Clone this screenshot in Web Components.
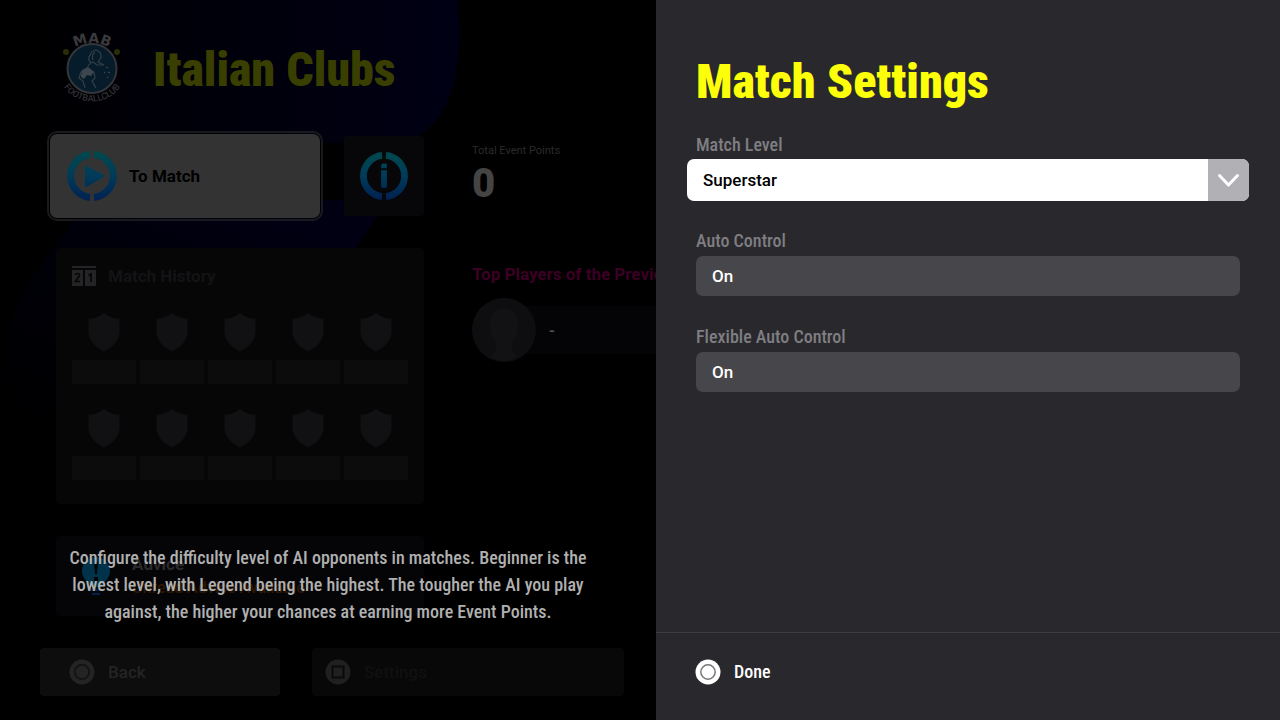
<!DOCTYPE html>
<html lang="en">
<head>
<meta charset="utf-8">
<meta name="viewport" content="width=device-width, initial-scale=1">
<title>Match Settings</title>
<style>
  body { margin: 0; background: #000; font-family: Roboto, "Open Sans", sans-serif; }
</style>
</head>
<body>
<match-app>
  <club-lobby slot="lobby">
    <club-title>Italian Clubs</club-title>
  </club-lobby>
  <help-text slot="lobby">Configure the difficulty level of AI opponents in matches. Beginner is the lowest level, with Legend being the highest. The tougher the AI you play against, the higher your chances at earning more Event Points.</help-text>
  <settings-panel slot="panel" heading="Match Settings">
    <setting-field label="Match Level" options="Superstar,Beginner,Legend" active></setting-field>
    <setting-field label="Auto Control" options="On,Off"></setting-field>
    <setting-field label="Flexible Auto Control" options="On,Off"></setting-field>
  </settings-panel>
</match-app>

<script>
const define = (name, html, setup) => {
  const template = document.createElement('template');
  template.innerHTML = html;
  customElements.define(name, class extends HTMLElement {
    connectedCallback() {
      if (this.shadowRoot) return;
      this.attachShadow({ mode: 'open' }).append(template.content.cloneNode(true));
      if (setup) setup(this, this.shadowRoot);
    }
  });
};

define('match-app', `
  <style>
    :host { display: grid; grid-template-columns: minmax(0, 41fr) minmax(0, 39fr); min-height: 100vh; }
    main { position: relative; overflow: hidden; }
  </style>
  <main><slot name="lobby"></slot></main>
  <slot name="panel"></slot>
`);

define('help-text', `
  <style>
    :host { position: absolute; left: 0; right: 0; bottom: 95px; padding: 0 54px; text-align: center;
      font: 500 18px/27px "Roboto Condensed", Roboto, sans-serif; color: #b0b0b0; }
    p { margin: 0; }
  </style>
  <p><slot></slot></p>
`);

/* Round ring with a split at the top and the bottom; the glyph goes in the middle. */
define('ring-icon', `
  <style>
    :host { display: block; width: 50px; height: 50px; flex: none; }
    svg { display: block; width: 100%; height: 100%; }
    .play, .info { display: none; }
    :host([glyph="info"]) { width: 48px; height: 48px; }
    :host([glyph="play"]) .play, :host([glyph="info"]) .info { display: inline; }
  </style>
  <svg viewBox="0 0 50 50" aria-hidden="true">
    <defs><linearGradient id="g" gradientUnits="userSpaceOnUse" x1="0" y1="0" x2="0" y2="50">
      <stop offset="0" stop-color="#00494c"/><stop offset=".5" stop-color="#003b59"/><stop offset="1" stop-color="#002052"/>
    </linearGradient></defs>
    <path d="M23 3.600A21.500 21.500 0 0 0 23 46.400M27 3.600A21.500 21.500 0 0 1 27 46.400" fill="none" stroke="url(#g)" stroke-width="7"/>
    <path class="play" d="M18 16Q18 14 20 15L36.500 24Q38 25 36.500 26L20 35.800Q18 36.500 18 34.500Z" fill="url(#g)"/>
    <path class="info" d="M23.500 12h3.500q1 0 1 1v4h-6v-3.500zM22 19h6v17q0 1.500-1.500 1.500h-3q-1.500 0-1.500-1.500z" fill="url(#g)"/>
  </svg>
`);

define('club-crest', `
  <style>
    :host { display: block; width: 60px; height: 72px; flex: none; }
    svg { display: block; overflow: visible; }
  </style>
  <svg width="60" height="72" viewBox="0 0 60 72" role="img" aria-label="MAB Football Club">
    <defs>
      <path id="top" d="M0 34.500A30 25.500 0 0 1 60 34.500"/>
      <path id="low" d="M-4 34.500A34 33 0 0 0 64 34.500"/>
    </defs>
    <circle cx="30" cy="34.500" r="24.500" fill="#061c2a" stroke="#34363b" stroke-width="2"/>
    <circle cx="4" cy="18" r="3" fill="#2b2d08"/><circle cx="55" cy="18" r="3" fill="#2b2d08"/>
    <path d="M28 22q1-6 6-6 6 2 5 8l-3 4 6 3-7 0-4-3q-5 2-6 7l-6 3-2 6 4 3 2 7M27 35l5 3 1 6-3 3 4 7M25 36l-6 6M28 21q-3 4 1 8M33 18q-4 3-2 8" fill="none" stroke="#343f47" stroke-width="1.200"/>
    <path d="M20 36l6-3 6 5-3 4-4-1-3 4-3-2z" fill="#3b464e"/>
    <path d="M44 33l2 1M46 38l2 1M42 38l1 1M45 43l1 1" stroke="#3b464e" stroke-width="1.200"/>
    <text style="font:700 14px 'DejaVu Sans',sans-serif" fill="#3a3a3c" text-anchor="middle"><textPath href="#top" startOffset="50%">MAB</textPath></text>
    <text style="font:500 9px Roboto,sans-serif" fill="#303032" text-anchor="middle"><textPath href="#low" startOffset="50%">FOOTBALLCLUB</textPath></text>
  </svg>
`);

define('club-title', `
  <style>
    :host { display: block; color: #393f00; }
    h1 { margin: 0; font: 900 48px/56px "Roboto Condensed", Roboto, sans-serif; white-space: nowrap; }
  </style>
  <h1><slot></slot></h1>
`);

define('match-history', `
  <style>
    :host { display: block; padding: 16px 16px 24px; border-radius: 4px; background: #060607; }
    header { display: flex; align-items: center; gap: 12px; margin-bottom: 24px; color: #131315; }
    h2 { margin: 0; font: 700 17px/24px Roboto, sans-serif; }
    ul { display: grid; grid-template-columns: repeat(5, 1fr); gap: 24px 4px; margin: 0; padding: 0; list-style: none; }
    li { display: grid; justify-items: center; gap: 8px; }
    li::after { content: ""; width: 100%; height: 24px; background: #0c0c0c; }
    svg { display: block; }
  </style>
  <header>
    <svg width="24" height="20" viewBox="0 0 24 20" aria-hidden="true">
      <path d="M0 0h24v2H0zM0 4h11v16H0zM13 4h11v16H13z" fill="#242426"/>
      <path d="M3.500 9Q3.500 7.500 5.500 7.500 8 7.500 7.500 9.500L3.500 15.500H8M16.500 9.500L19 8V16" fill="none" stroke="#060607" stroke-width="1.700"/>
    </svg>
    <h2>Match History</h2>
  </header>
  <ul></ul>
`, (host, root) => {
  root.querySelector('ul').innerHTML = ('<li><svg width="32" height="40" viewBox="0 0 32 40" aria-hidden="true">' +
    '<path d="M16 1Q22 6 31.500 7V20Q31 32 16 39.500 1 32 .500 20V7Q10 6 16 1Z" fill="#111113"/></svg></li>').repeat(10);
});

define('advice-card', `
  <style>
    :host { display: flex; align-items: center; gap: 20px; height: 80px; padding: 0 24px; border-radius: 4px; background: #050508; box-sizing: border-box; }
    svg { flex: none; width: 32px; height: 40px; }
    h2, p { margin: 0; }
    h2 { font: 700 17px/24px Roboto, sans-serif; color: #2a2a2c; }
    p { font: 500 16px/24px Roboto, sans-serif; color: #2e1700; }
  </style>
  <svg viewBox="0 0 32 40" aria-hidden="true">
    <path d="M16 1a14 14 0 0 1 8 25.500q-2 2-2 4.500H10q0-2.500-2-4.500A14 14 0 0 1 16 1Z" fill="#00324a"/>
    <path d="M10 34h12M12 38h8" stroke="#00224a" stroke-width="2"/>
    <path d="M14 6h4l-1 12h-2zM14 21h4v4h-4z" fill="#050508"/>
  </svg>
  <div><h2>Advice</h2><p>Unread Advice Available</p></div>
`);

define('event-summary', `
  <style>
    :host { display: block; min-width: 0; padding-top: 9px; white-space: nowrap; }
    dl, dd, h2, ol { margin: 0; padding: 0; }
    dt { font: 400 11px/16px Roboto, sans-serif; color: #2b2b2b; }
    dd { font: 900 40px/50px Roboto, sans-serif; color: #444; }
    h2 { margin: 53px 0 12px; font: 700 17px/24px Roboto, sans-serif; color: #3c0024; }
    li { display: flex; align-items: center; gap: 12px; height: 64px; font: 500 17px/24px Roboto, sans-serif; color: #555;
      background: linear-gradient(#040406, #040406) 32px 50% / 100% 48px no-repeat; }
    svg { flex: none; width: 65px; height: 64px; }
  </style>
  <dl><dt>Total Event Points</dt><dd>0</dd></dl>
  <h2>Top Players of the Previous</h2>
  <ol><li>
    <svg viewBox="0 0 65 64" aria-hidden="true">
      <circle cx="32" cy="32" r="32" fill="#0e0e10"/>
      <path d="M32 10q14 0 14 18 0 10-6 16v8l6 7q-14 8-28 0l6-7v-8q-6-6-6-16 0-18 14-18Z" fill="#121214"/>
    </svg>
    <span>-</span>
  </li></ol>
`);

/* Round controller key: a ring or a square cut into a filled disc. */
define('pad-key', `
  <style>
    :host { display: block; width: 24px; height: 24px; flex: none; }
    svg { display: block; overflow: visible; }
    .square { display: none; }
    :host([shape="square"]) .square { display: inline; }
    :host([shape="square"]) .ring { display: none; }
  </style>
  <svg width="24" height="24" viewBox="0 0 24 24" aria-hidden="true" fill="none" stroke="var(--cut)" stroke-width="var(--line, 1.500)">
    <circle cx="12" cy="12" r="12.500" fill="currentColor" stroke="none"/>
    <circle class="ring" cx="12" cy="12" r="7.200"/>
    <rect class="square" x="6.500" y="6.500" width="11" height="11"/>
  </svg>
`);

define('club-lobby', `
  <style>
    :host { display: block; position: relative; min-height: 100vh; box-sizing: border-box; padding: 34px 0 24px; }
    .backdrop { position: absolute; left: 0; top: 0; }
    header, .body, nav { position: relative; }
    header { display: flex; align-items: center; gap: 31px; padding-left: 62px; }
    .body { display: grid; grid-template-columns: 368px minmax(0, 1fr); column-gap: 48px; margin: 28px 0 32px; padding-left: 56px; }
    .cards { display: grid; gap: 32px; }
    .row { display: flex; align-items: center; gap: 24px; margin: 0 0 -2px -6px; }
    button { display: flex; align-items: center; border: 0; padding: 0; font: 700 17px/24px Roboto, sans-serif; }
    .go { flex: 1; gap: 12px; height: 84px; padding-left: 17px; border-radius: 7px; background: #333; color: #000; outline: 2px solid #1a1a1e; outline-offset: 1px; }
    .info { justify-content: center; width: 80px; height: 80px; border-radius: 3px; background: #070709; }
    nav { display: flex; gap: 32px; padding: 0 32px 0 40px; }
    nav button { gap: 14px; height: 48px; border-radius: 4px; font-weight: 500; --line: 2; }
    .back { width: 240px; padding-left: 30px; background: #0d0d0d; color: #242424; --cut: #141414; }
    .settings { flex: 1; padding-left: 14px; background: #080808; color: #202020; --cut: #0a0a0a; }
    .settings span { color: #101010; }
  </style>
  <svg class="backdrop" width="656" height="520" viewBox="0 0 656 520" aria-hidden="true">
    <defs>
      <linearGradient id="a"><stop offset="0" stop-color="#000"/><stop offset=".35" stop-color="#000009"/><stop offset="1" stop-color="#000014"/></linearGradient>
      <linearGradient id="b" x1="0" y1="1" x2=".6" y2="0"><stop offset="0" stop-color="#000"/><stop offset=".6" stop-color="#000008"/><stop offset="1" stop-color="#000012"/></linearGradient>
    </defs>
    <path d="M20 0H457Q464 45 452 90 440 128 405 143H20Z" fill="url(#a)"/>
    <path d="M80 212Q120 200 180 200H345L378 215 356 248V440H20Q-10 340 30 280Z" fill="url(#b)"/>
  </svg>
  <header><club-crest></club-crest><slot></slot></header>
  <div class="body">
    <div class="cards">
      <div class="row">
        <button class="go"><ring-icon glyph="play"></ring-icon>To Match</button>
        <button class="info" aria-label="Information"><ring-icon glyph="info"></ring-icon></button>
      </div>
      <match-history></match-history>
      <advice-card></advice-card>
    </div>
    <event-summary></event-summary>
  </div>
  <nav>
    <button class="back"><pad-key></pad-key><span>Back</span></button>
    <button class="settings"><pad-key shape="square"></pad-key><span>Settings</span></button>
  </nav>
`);

define('settings-panel', `
  <style>
    :host { display: flex; flex-direction: column; background: #29282d; }
    section { flex: 1; padding: 54px 40px 40px; }
    h2 { margin: 0 0 23px; font: 900 48px/56px "Roboto Condensed", Roboto, sans-serif; color: #fdff0a; }
    .fields { display: grid; gap: 30px; }
    footer { padding: 19px 40px 28px; border-top: 1px solid #3d3c41; }
    button { display: flex; align-items: center; gap: 14px; height: 40px; padding: 0; border: 0; background: none;
      font: 500 18px/24px "Roboto Condensed", Roboto, sans-serif; color: #fff; --cut: #77767a; }
  </style>
  <section><h2></h2><div class="fields"><slot></slot></div></section>
  <footer><button><pad-key></pad-key>Done</button></footer>
`, (host, root) => { root.querySelector('h2').textContent = host.getAttribute('heading'); });

define('setting-field', `
  <style>
    :host { display: grid; gap: 3px; margin-bottom: -1px; }
    label { font: 500 18px/24px "Roboto Condensed", Roboto, sans-serif; color: #7f7e82; }
    .box { position: relative; height: 40px; border-radius: 7px; overflow: hidden; background: #47464a; color: #fff; }
    select { appearance: none; display: block; width: 100%; height: 100%; margin: 0; padding: 0 16px; border: 0; outline: 0;
      background: none; color: inherit; font: 500 17px/24px Roboto, sans-serif; }
    svg { display: none; position: absolute; right: 0; top: 0; width: 41px; height: 100%; background: #b1b0b5; pointer-events: none; }
    :host([active]) .box { height: 42px; margin: -1px -9px; background: #fff; color: #000; }
    :host([active]) svg { display: block; }
  </style>
  <label for="value"></label>
  <div class="box">
    <select id="value"></select>
    <svg viewBox="0 0 41 42" aria-hidden="true"><path d="M11.500 16.500L20.500 26 29.500 16.500" fill="none" stroke="#fff" stroke-width="3" stroke-linecap="round" stroke-linejoin="round"/></svg>
  </div>
`, (host, root) => {
  root.querySelector('label').textContent = host.getAttribute('label');
  for (const name of host.getAttribute('options').split(',')) root.querySelector('select').add(new Option(name));
});
</script>
</body>
</html>
